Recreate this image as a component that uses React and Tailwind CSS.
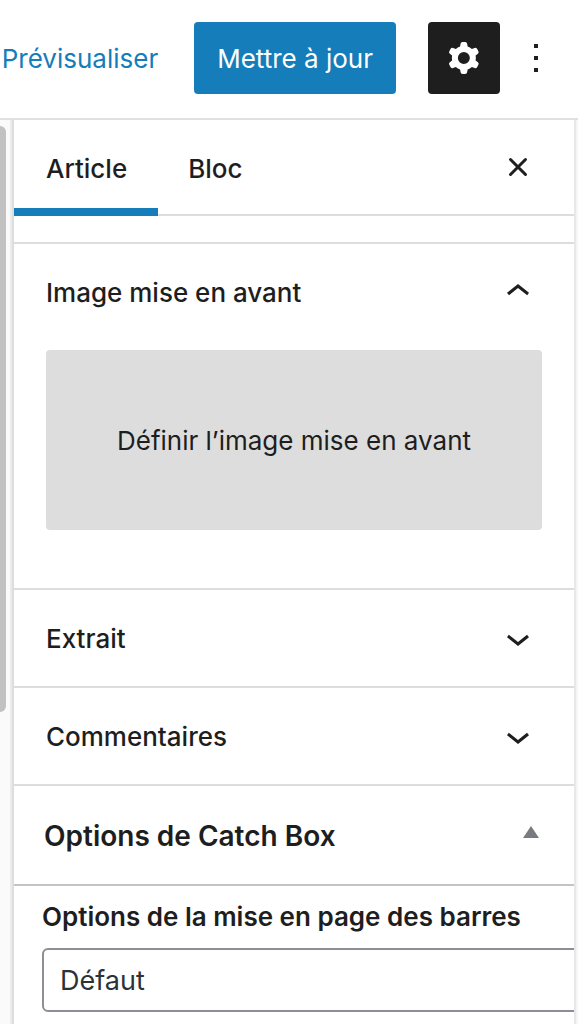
import { useState } from "react";

const PANELS = [
  { id: "image", title: "Image mise en avant" },
  { id: "extrait", title: "Extrait" },
  { id: "commentaires", title: "Commentaires" },
];

function Icon({ d }) {
  return (
    <svg viewBox="0 0 24 24" className="size-12 shrink-0" fill="currentColor" fillRule="evenodd" aria-hidden="true">
      <path d={d} />
    </svg>
  );
}

const COG =
  "M10.289 4.836A1 1 0 0111.275 4h1.306a1 1 0 01.987.836l.244 1.466c.787.26 1.503.679 2.108 1.218l1.393-.522a1 1 0 011.216.437l.653 1.13a1 1 0 01-.23 1.273l-1.148.944a6.025 6.025 0 010 2.435l1.149.946a1 1 0 01.23 1.272l-.653 1.13a1 1 0 01-1.216.437l-1.394-.522c-.605.54-1.32.958-2.108 1.218l-.244 1.466a1 1 0 01-.987.836h-1.306a1 1 0 01-.986-.836l-.244-1.466a5.995 5.995 0 01-2.108-1.218l-1.394.522a1 1 0 01-1.217-.436l-.653-1.131a1 1 0 01.23-1.272l1.149-.946a6.026 6.026 0 010-2.435l-1.148-.944a1 1 0 01-.23-1.272l.653-1.131a1 1 0 011.217-.437l1.393.522a5.994 5.994 0 012.108-1.218l.244-1.466zM14.929 12a3 3 0 11-6 0 3 3 0 016 0z";
const DOTS = "M13 19h-2v-2h2v2zm0-6h-2v-2h2v2zm0-6h-2V5h2v2z";
const CHEVRON_UP = "M6.5 12.4L12 8l5.5 4.4-.9 1.2L12 10l-4.5 3.6-1-1.2z";
const CHEVRON_DOWN = "M17.5 11.6L12 16l-5.5-4.4.9-1.2L12 14l4.5-3.6 1 1.2z";

function Header() {
  return (
    <header className="flex items-center justify-end border-b-2 border-[#e0e0e0] pt-[22px] pr-[18px] pb-6">
      <a href="#preview" className="mr-9 pt-0.5 whitespace-nowrap text-[26px] leading-8 text-[#147dba]">
        Prévisualiser
      </a>
      <button type="button" className="h-[72px] rounded-sm bg-[#147dba] px-[23px] pt-0.5 whitespace-nowrap text-[26px] leading-8 text-white">
        Mettre à jour
      </button>
      <button type="button" aria-label="Réglages" className="ml-8 rounded-sm bg-[#1e1e1e] p-3 text-white">
        <Icon d={COG} />
      </button>
      <button type="button" aria-label="Options" className="ml-3">
        <Icon d={DOTS} />
      </button>
    </header>
  );
}

function Tabs({ tab, setTab }) {
  return (
    <div className="flex h-24 shrink-0 items-stretch border-b-2 border-[#ddd] pr-8" role="tablist">
      {["Article", "Bloc"].map((name) => (
        <button
          key={name}
          type="button"
          role="tab"
          aria-selected={tab === name}
          onClick={() => setTab(name)}
          className={
            tab === name
              ? "-mb-0.5 border-b-8 border-[#147dba] pr-[31px] pl-8 pt-2.5 text-[26px] leading-8 font-medium"
              : "px-[30px] pt-1 text-[26px] leading-8 font-medium"
          }
        >
          {name}
        </button>
      ))}
      <button type="button" aria-label="Fermer" className="ml-auto">
        <svg viewBox="0 0 48 48" className="size-12" fill="none" stroke="currentColor" strokeWidth="3" aria-hidden="true">
          <path d="M16.5 16.5l15 15m0-15l-15 15" strokeLinecap="round" />
        </svg>
      </button>
    </div>
  );
}

function Panel({ title, open, onToggle, children }) {
  return (
    <section className="border-t-2 border-[#ddd]">
      <h2>
        <button
          type="button"
          aria-expanded={open}
          onClick={onToggle}
          className="flex h-24 w-full items-center justify-between px-8 text-[26px] leading-8 font-medium"
        >
          <span className="pt-0.5">{title}</span>
          <Icon d={open ? CHEVRON_UP : CHEVRON_DOWN} />
        </button>
      </h2>
      {open && children}
    </section>
  );
}

function MetaBox() {
  const [open, setOpen] = useState(true);
  return (
    <section className="border-t-2 border-[#ddd]">
      <h2 className="border-b-2 border-[#c3c4c7]">
        <button
          type="button"
          aria-expanded={open}
          onClick={() => setOpen(!open)}
          className="flex h-[98px] w-full items-center justify-between pr-[35px] pl-[30px] text-[28px] leading-9 font-semibold"
        >
          <span className="pt-0.5">Options de Catch Box</span>
          <svg viewBox="0 0 16 12" className="mb-1.5 h-3 w-4" fill="#787c82" aria-hidden="true">
            <path d="M8 0l8 12H0z" />
          </svg>
        </button>
      </h2>
      {open && (
        <div className="overflow-hidden pt-[15px] pb-3 pl-7">
          <label htmlFor="layout" className="block whitespace-nowrap text-[26px] leading-8 font-semibold">
            Options de la mise en page des barres
          </label>
          <select
            id="layout"
            className="mt-[15px] block h-16 w-[120%] appearance-none rounded-md border-2 border-[#8c8f94] bg-white px-4 pt-0.5 text-[27px] leading-9 text-[#2c3338]"
          >
            <option>Défaut</option>
          </select>
        </div>
      )}
    </section>
  );
}

export default function App() {
  const [tab, setTab] = useState("Article");
  const [opened, setOpened] = useState("image");

  return (
    <div className="flex min-h-screen flex-col bg-white font-['Inter',sans-serif] text-[#1e1e1e]">
      <Header />
      <div className="flex flex-1 bg-[#fafafa]">
        <div className="w-2.5 shrink-0 pt-1.5">
          <div className="h-[586px] w-1.5 rounded-r-md bg-[#c1c1c1]" />
        </div>
        <div className="w-0.5 shrink-0 bg-[#ebebeb]" />
        <aside className="flex min-w-0 flex-1 flex-col border-l-2 border-[#ddd] bg-white">
          <Tabs tab={tab} setTab={setTab} />
          <div className="pt-[26px]">
            {PANELS.map((p) => (
              <Panel
                key={p.id}
                title={p.title}
                open={opened === p.id}
                onToggle={() => setOpened(opened === p.id ? "" : p.id)}
              >
                <div className="px-8 pt-2.5 pb-[58px]">
                  <button type="button" className="h-[180px] w-full rounded-sm bg-[#ddd] pt-0.5 text-[26px] leading-8">
                    Définir l’image mise en avant
                  </button>
                </div>
              </Panel>
            ))}
            <MetaBox />
          </div>
        </aside>
        <div className="w-1 shrink-0 border-l-2 border-[#e8e8e8] bg-[#f5f5f5]" />
      </div>
    </div>
  );
}
